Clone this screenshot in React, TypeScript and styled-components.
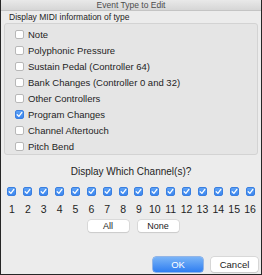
import React, { useState } from 'react';
import styled, { createGlobalStyle } from 'styled-components';

const GlobalStyle = createGlobalStyle`
  html, body { margin: 0; padding: 0; background: #ececec; }
  * { box-sizing: border-box; }
`;

const FONT = `"Liberation Sans", Arial, sans-serif`;

const Window = styled.div`
  width: 262px;
  height: 275px;
  background: #ececec;
  border-left: 1px solid #262626;
  border-right: 1px solid #262626;
  border-bottom: 1px solid #262626;
  font-family: ${FONT};
  color: #1e1e1e;
  display: flex;
  flex-direction: column;
  overflow: hidden;
`;

const TitleBar = styled.div`
  height: 11px;
  flex: none;
  background: linear-gradient(#e9e9e9, #d6d6d6);
  border-bottom: 1px solid #c4c4c4;
  font-size: 8.5px;
  line-height: 10px;
  color: #4c4c4c;
  text-align: center;
  overflow: hidden;
`;

const Body = styled.div`
  flex: 1;
  display: flex;
  flex-direction: column;
  padding: 0 3px 0 3px;
`;

const GroupLabel = styled.div`
  font-size: 8.5px;
  line-height: 12px;
  padding-left: 5px;
`;

const GroupBox = styled.div`
  background: #e5e5e5;
  border: 1px solid #d3d3d3;
  border-radius: 3px;
  padding: 2px 0 0 10px;
  height: 132px;
  display: flex;
  flex-direction: column;
`;

const Row = styled.label`
  height: 16px;
  display: flex;
  align-items: center;
  gap: 4px;
  font-size: 9.5px;
`;

const Box = styled.span<{ $on: boolean }>`
  width: 9px;
  height: 9px;
  flex: none;
  border-radius: 2px;
  display: flex;
  align-items: center;
  justify-content: center;
  background: ${({ $on }) => ($on ? 'linear-gradient(#5ea2f5, #3c86ef)' : '#ffffff')};
  border: 1px solid ${({ $on }) => ($on ? '#3a7fe0' : '#b8b8b8')};
`;

const Heading = styled.div`
  margin-top: 11px;
  text-align: center;
  font-size: 10px;
  line-height: 12px;
`;

const ChannelGrid = styled.div`
  margin-top: 9px;
  display: grid;
  grid-template-columns: repeat(16, 1fr);
  width: 254px;
  row-gap: 7px;
  justify-items: center;
  align-items: center;
`;

const Num = styled.span`
  font-size: 10.5px;
  line-height: 12px;
`;

const Pair = styled.div`
  margin-top: 5px;
  display: flex;
  justify-content: center;
  gap: 9px;
  padding-left: 4px;
`;

const SmallButton = styled.button`
  width: 41px;
  height: 12px;
  padding: 0;
  font-family: ${FONT};
  font-size: 9px;
  line-height: 10px;
  color: #222;
  background: #ffffff;
  border: none;
  border-radius: 3px;
  box-shadow: 0 0 0 0.5px #c8c8c8, 0 1px 1px rgba(0, 0, 0, 0.12);
`;

const Footer = styled.div`
  margin-top: auto;
  margin-bottom: 2px;
  display: flex;
  justify-content: flex-end;
  gap: 8px;
`;

const DialogButton = styled.button<{ $primary?: boolean }>`
  width: ${({ $primary }) => ($primary ? 50 : 47)}px;
  height: 15px;
  padding: 0;
  font-family: ${FONT};
  font-size: 9.5px;
  line-height: 13px;
  border-radius: 3px;
  border: none;
  color: ${({ $primary }) => ($primary ? '#ffffff' : '#222222')};
  background: ${({ $primary }) => ($primary ? 'linear-gradient(#7ab4f7, #2f7ef1)' : '#ffffff')};
  box-shadow: ${({ $primary }) =>
    $primary ? '0 0 0 0.5px #3a7ee0' : '0 0 0 0.5px #c4c4c4, 0 1px 1px rgba(0,0,0,0.12)'};
`;

const Check = () => (
  <svg width="7" height="7" viewBox="0 0 7 7">
    <path d="M1.2 3.7 L2.9 5.4 L5.9 1.4" fill="none" stroke="#fff" strokeWidth="1.3" strokeLinecap="round" strokeLinejoin="round" />
  </svg>
);

const types = [
  'Note',
  'Polyphonic Pressure',
  'Sustain Pedal (Controller 64)',
  'Bank Changes (Controller 0 and 32)',
  'Other Controllers',
  'Program Changes',
  'Channel Aftertouch',
  'Pitch Bend',
];

const App: React.FC = () => {
  const [picked, setPicked] = useState<string[]>(['Program Changes']);
  const [channels, setChannels] = useState<boolean[]>(Array(16).fill(true));

  const toggle = (t: string) =>
    setPicked(p => (p.includes(t) ? p.filter(x => x !== t) : [...p, t]));

  return (
    <>
      <GlobalStyle />
      <Window>
        <TitleBar>Event Type to Edit</TitleBar>
        <Body>
          <GroupLabel>Display MIDI information of type</GroupLabel>
          <GroupBox>
            {types.map(t => (
              <Row key={t} onClick={() => toggle(t)}>
                <Box $on={picked.includes(t)}>{picked.includes(t) && <Check />}</Box>
                {t}
              </Row>
            ))}
          </GroupBox>
          <Heading>Display Which Channel(s)?</Heading>
          <ChannelGrid>
            {channels.map((on, i) => (
              <Box
                key={`c${i}`}
                $on={on}
                onClick={() => setChannels(c => c.map((v, j) => (j === i ? !v : v)))}
              >
                {on && <Check />}
              </Box>
            ))}
            {channels.map((_, i) => (
              <Num key={`n${i}`}>{i + 1}</Num>
            ))}
          </ChannelGrid>
          <Pair>
            <SmallButton onClick={() => setChannels(Array(16).fill(true))}>All</SmallButton>
            <SmallButton onClick={() => setChannels(Array(16).fill(false))}>None</SmallButton>
          </Pair>
          <Footer>
            <DialogButton $primary>OK</DialogButton>
            <DialogButton>Cancel</DialogButton>
          </Footer>
        </Body>
      </Window>
    </>
  );
};

export default App;
